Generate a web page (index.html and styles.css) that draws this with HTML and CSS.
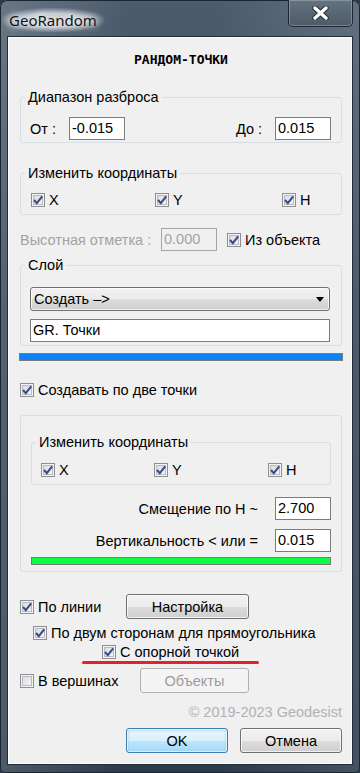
FILE: index.html
```html
<!DOCTYPE html>
<html lang="ru">
<head>
    <meta charset="UTF-8">
    <meta name="viewport" content="width=device-width, initial-scale=1.0">
    <title>GeoRandom</title>
    <link rel="stylesheet" href="styles.css">
</head>
<body>
    <div class="window">
        <div class="titlebar">
            <span class="title">GeoRandom</span>
            <button class="close" type="button">
                <svg width="17" height="14" viewBox="0 0 17 14">
                    <path d="M3 2 L14 12 M14 2 L3 12" stroke="#26303b" stroke-width="5.5" stroke-linecap="round"/>
                    <path d="M3 2 L14 12 M14 2 L3 12" stroke="#fff" stroke-width="3.4" stroke-linecap="round"/>
                </svg>
            </button>
        </div>

        <div class="client">
            <div class="heading">РАНДОМ-ТОЧКИ</div>

            <!-- Диапазон -->
            <fieldset class="group range">
                <legend>Диапазон разброса</legend>
                <div class="range-row">
                    <label class="pair"><span class="lbl">От :</span><input class="field" type="text" value="-0.015"></label>
                    <label class="pair"><span class="lbl">До :</span><input class="field" type="text" value="0.015"></label>
                </div>
            </fieldset>

            <fieldset class="group coords">
                <legend>Изменить координаты</legend>
                <div class="xyh-row">
                    <label class="cbx"><span class="check"><svg width="12" height="12" viewBox="0 0 12 12"><path d="M2 6 L4.8 9.2 L10.2 2.4" fill="none" stroke="#3b4c88" stroke-width="2.1"/></svg></span>X</label>
                    <label class="cbx"><span class="check"><svg width="12" height="12" viewBox="0 0 12 12"><path d="M2 6 L4.8 9.2 L10.2 2.4" fill="none" stroke="#3b4c88" stroke-width="2.1"/></svg></span>Y</label>
                    <label class="cbx"><span class="check"><svg width="12" height="12" viewBox="0 0 12 12"><path d="M2 6 L4.8 9.2 L10.2 2.4" fill="none" stroke="#3b4c88" stroke-width="2.1"/></svg></span>H</label>
                </div>
            </fieldset>

            <div class="elev-row">
                <span class="elev-lbl">Высотная отметка :</span>
                <input class="field" type="text" value="0.000" disabled>
                <label class="cbx from-obj"><span class="check"><svg width="12" height="12" viewBox="0 0 12 12"><path d="M2 6 L4.8 9.2 L10.2 2.4" fill="none" stroke="#3b4c88" stroke-width="2.1"/></svg></span>Из объекта</label>
            </div>

            <!-- Слой -->
            <fieldset class="group layer">
                <legend>Слой</legend>
                <div class="combo">
                    <span>Создать –&gt;</span>
                    <span class="arrow"></span>
                </div>
                <input class="field wide" type="text" value="GR. Точки">
            </fieldset>

            <div class="bar blue"></div>

            <div class="row-cb two-points">
                <label class="cbx"><span class="check"><svg width="12" height="12" viewBox="0 0 12 12"><path d="M2 6 L4.8 9.2 L10.2 2.4" fill="none" stroke="#3b4c88" stroke-width="2.1"/></svg></span>Создавать по две точки</label>
            </div>

            <div class="box">
                <fieldset class="group inner">
                    <legend>Изменить координаты</legend>
                    <div class="xyh-row">
                        <label class="cbx"><span class="check"><svg width="12" height="12" viewBox="0 0 12 12"><path d="M2 6 L4.8 9.2 L10.2 2.4" fill="none" stroke="#3b4c88" stroke-width="2.1"/></svg></span>X</label>
                        <label class="cbx"><span class="check"><svg width="12" height="12" viewBox="0 0 12 12"><path d="M2 6 L4.8 9.2 L10.2 2.4" fill="none" stroke="#3b4c88" stroke-width="2.1"/></svg></span>Y</label>
                        <label class="cbx"><span class="check"><svg width="12" height="12" viewBox="0 0 12 12"><path d="M2 6 L4.8 9.2 L10.2 2.4" fill="none" stroke="#3b4c88" stroke-width="2.1"/></svg></span>H</label>
                    </div>
                </fieldset>
                <label class="value-row"><span>Смещение по Н ~</span><input class="field" type="text" value="2.700"></label>
                <label class="value-row second"><span>Вертикальность &lt; или =</span><input class="field" type="text" value="0.015"></label>
                <div class="bar green"></div>
            </div>

            <div class="btn-row line-row">
                <label class="cbx"><span class="check"><svg width="12" height="12" viewBox="0 0 12 12"><path d="M2 6 L4.8 9.2 L10.2 2.4" fill="none" stroke="#3b4c88" stroke-width="2.1"/></svg></span>По линии</label>
                <button class="btn setup" type="button">Настройка</button>
            </div>
            <div class="row-cb both-sides">
                <label class="cbx"><span class="check"><svg width="12" height="12" viewBox="0 0 12 12"><path d="M2 6 L4.8 9.2 L10.2 2.4" fill="none" stroke="#3b4c88" stroke-width="2.1"/></svg></span>По двум сторонам для прямоугольника</label>
            </div>
            <div class="row-cb ref-point">
                <label class="cbx"><span class="check"><svg width="12" height="12" viewBox="0 0 12 12"><path d="M2 6 L4.8 9.2 L10.2 2.4" fill="none" stroke="#3b4c88" stroke-width="2.1"/></svg></span>С опорной точкой</label>
            </div>
            <div class="underline"></div>
            <div class="btn-row vertex-row">
                <label class="cbx"><span class="check"></span>В вершинах</label>
                <button class="btn objects" type="button" disabled>Объекты</button>
            </div>

            <div class="copyright">© 2019-2023 Geodesist</div>

            <div class="actions">
                <button class="btn default" type="button">OK</button>
                <button class="btn" type="button">Отмена</button>
            </div>
        </div>
    </div>
</body>
</html>
```

FILE: styles.css
```css
* {
    margin: 0;
    padding: 0;
    box-sizing: border-box;
}

body {
    background: #2a394a;
    font-family: 'Liberation Sans', Arial, sans-serif;
    font-size: 14.5px;
    color: #000;
}

/* окно */
.window {
    width: 360px;
    height: 773px;
    display: flex;
    flex-direction: column;
    border-radius: 7px 7px 5px 5px;
    overflow: hidden;
    background:
        linear-gradient(90deg, rgba(255, 255, 255, 0.16), rgba(255, 255, 255, 0) 35%, rgba(255, 255, 255, 0) 60%, rgba(255, 255, 255, 0.12)),
        linear-gradient(180deg, #4d5c6d 0%, #344456 40%, #2b3a4c 100%);
    box-shadow: inset 0 0 0 1px #1b2530;
}

.titlebar {
    height: 36px;
    display: flex;
    justify-content: space-between;
    align-items: flex-start;
    padding-left: 2px;
}

.title {
    margin-top: 8px;
    padding: 2px 7px;
    font-family: 'Noto Sans', 'Open Sans', sans-serif;
    font-size: 15px;
    line-height: 20px;
    color: #141414;
    border-radius: 10px;
    background: radial-gradient(ellipse at center, rgba(235, 240, 245, 0.7) 40%, rgba(235, 240, 245, 0) 75%);
    text-shadow: 0 0 6px #fff, 0 0 10px #fff;
}

.close {
    width: 65px;
    height: 27px;
    margin-right: 7px;
    display: flex;
    align-items: center;
    justify-content: center;
    border: 1px solid #1c2631;
    border-top: none;
    border-radius: 0 0 5px 5px;
    background: linear-gradient(180deg, #65727f, #4d5a67);
    box-shadow: inset 0 0 0 1px rgba(200, 210, 220, 0.35);
}

.client {
    flex: 1;
    margin: 0 7px 8px;
    padding: 0 10px 0 12px;
    display: flex;
    flex-direction: column;
    background: #f0f0f0;
    border: 1px solid #222d39;
    box-shadow: inset 0 0 0 1px #fbfbfb;
}

.heading {
    margin-top: 15px;
    text-align: center;
    font: bold 13px/16px 'DejaVu Sans Mono', monospace;
}

/* группы */
.group {
    border: 1px solid #d5dfe5;
    border-radius: 3px;
}

.group legend {
    margin-left: 4px;
    padding: 0 3px;
    line-height: 16px;
}

.range {
    margin-top: 21px;
}

.range-row {
    margin: 12px 0 2px;
    padding: 0 10px 0 9px;
    display: flex;
    justify-content: space-between;
}

.pair {
    display: flex;
    align-items: center;
}

.lbl {
    width: 39px;
}

.field {
    width: 56px;
    height: 23px;
    padding: 0 2px 2px;
    border: 1px solid #7c7c7c;
    background: #fff;
    font: 14.5px 'Liberation Sans', Arial, sans-serif;
    color: #000;
    outline: none;
}

.field:disabled {
    border-color: #a5a5a5;
    background: #f0f0f0;
    color: #a3a3a3;
}

.coords {
    margin-top: 22px;
}

.xyh-row {
    margin: 11px 0 6px;
    padding-left: 10px;
    height: 16px;
    display: grid;
    grid-template-columns: 124px 127px auto;
}

.cbx {
    display: flex;
    align-items: center;
    gap: 4px;
    line-height: 16px;
}

.check {
    width: 14px;
    height: 14px;
    flex: none;
    display: flex;
    align-items: center;
    justify-content: center;
    border: 1px solid #8e8f8f;
    background: linear-gradient(135deg, #d4d7dc, #fafafa);
    box-shadow: inset 0 0 0 1px #f4f4f4, inset 0 0 0 2px #b8bcc2;
}

.elev-row {
    margin-top: 13px;
    height: 23px;
    display: flex;
    align-items: center;
}

.elev-lbl {
    width: 141px;
    color: #a3a3a3;
}

.from-obj {
    margin-left: 10px;
}

.layer {
    margin-top: 6px;
}

.combo {
    margin: 14px 0 0 9px;
    width: 300px;
    height: 24px;
    padding: 0 5px 0 3px;
    display: flex;
    align-items: center;
    justify-content: space-between;
    border: 1px solid #707070;
    border-radius: 3px;
    background: linear-gradient(180deg, #f2f2f2 0%, #ebebeb 50%, #dddddd 51%, #cfcfcf 100%);
    box-shadow: inset 0 0 0 1px rgba(255, 255, 255, 0.7);
}

.arrow {
    width: 0;
    height: 0;
    border-left: 4.5px solid transparent;
    border-right: 4.5px solid transparent;
    border-top: 5px solid #000;
}

.field.wide {
    margin: 8px 0 3px 9px;
    width: 300px;
}

.bar {
    height: 8px;
    border: 1px solid #7a7a7a;
}

.bar.blue {
    margin: 7px 0 0 -1px;
    width: 324px;
    background: #0a84f8;
}

.row-cb {
    height: 16px;
    display: flex;
}

.two-points {
    margin-top: 21px;
}

/* блок двух точек */
.box {
    margin-top: 17px;
    padding: 18px 10px 6px 10px;
    border: 1px solid #d5dfe5;
    border-radius: 3px;
}

.inner .xyh-row {
    margin-top: 12px;
    padding-left: 9px;
    grid-template-columns: 113px 114px auto;
}

.value-row {
    margin-top: 12px;
    display: flex;
    justify-content: flex-end;
    align-items: center;
    gap: 17px;
}

.value-row.second {
    margin-top: 9px;
}

.bar.green {
    margin-top: 5px;
    background: #0bff42;
}

.btn-row {
    height: 25px;
    display: flex;
    align-items: center;
}

.line-row {
    margin-top: 22px;
}

.line-row .cbx {
    width: 106px;
}

.both-sides {
    margin-top: 6px;
    padding-left: 13px;
}

.ref-point {
    margin-top: 3px;
    padding-left: 82px;
}

.underline {
    margin: 1px 0 0 62px;
    width: 177px;
    height: 3px;
    border-radius: 2px;
    background: #e3202b;
}

.vertex-row {
    margin-top: 4px;
}

.vertex-row .cbx {
    width: 120px;
}

.btn {
    height: 25px;
    border: 1px solid #707070;
    border-radius: 3px;
    background: linear-gradient(180deg, #f2f2f2 0%, #ebebeb 50%, #dddddd 51%, #cfcfcf 100%);
    box-shadow: inset 0 0 0 1px rgba(255, 255, 255, 0.7);
    font: 14.5px 'Liberation Sans', Arial, sans-serif;
    color: #000;
}

.setup {
    width: 123px;
}

.objects {
    width: 109px;
}

.btn:disabled {
    border-color: #adb2b5;
    background: #f4f4f4;
    box-shadow: none;
    color: #9c9c9c;
}

.copyright {
    margin-top: 11px;
    line-height: 16px;
    text-align: right;
    color: #b2b2b2;
}

.actions {
    margin-top: 8px;
    display: flex;
    justify-content: flex-end;
    gap: 12px;
}

.actions .btn {
    width: 102px;
}

.btn.default {
    border-color: #3c7fb1;
    background: linear-gradient(180deg, #eaf6fd 0%, #d9f0fc 50%, #bee6fd 51%, #a7d9f5 100%);
    box-shadow: inset 0 0 0 1px rgba(255, 255, 255, 0.6), inset 0 0 3px 1px #9fd2f0;
}
```
